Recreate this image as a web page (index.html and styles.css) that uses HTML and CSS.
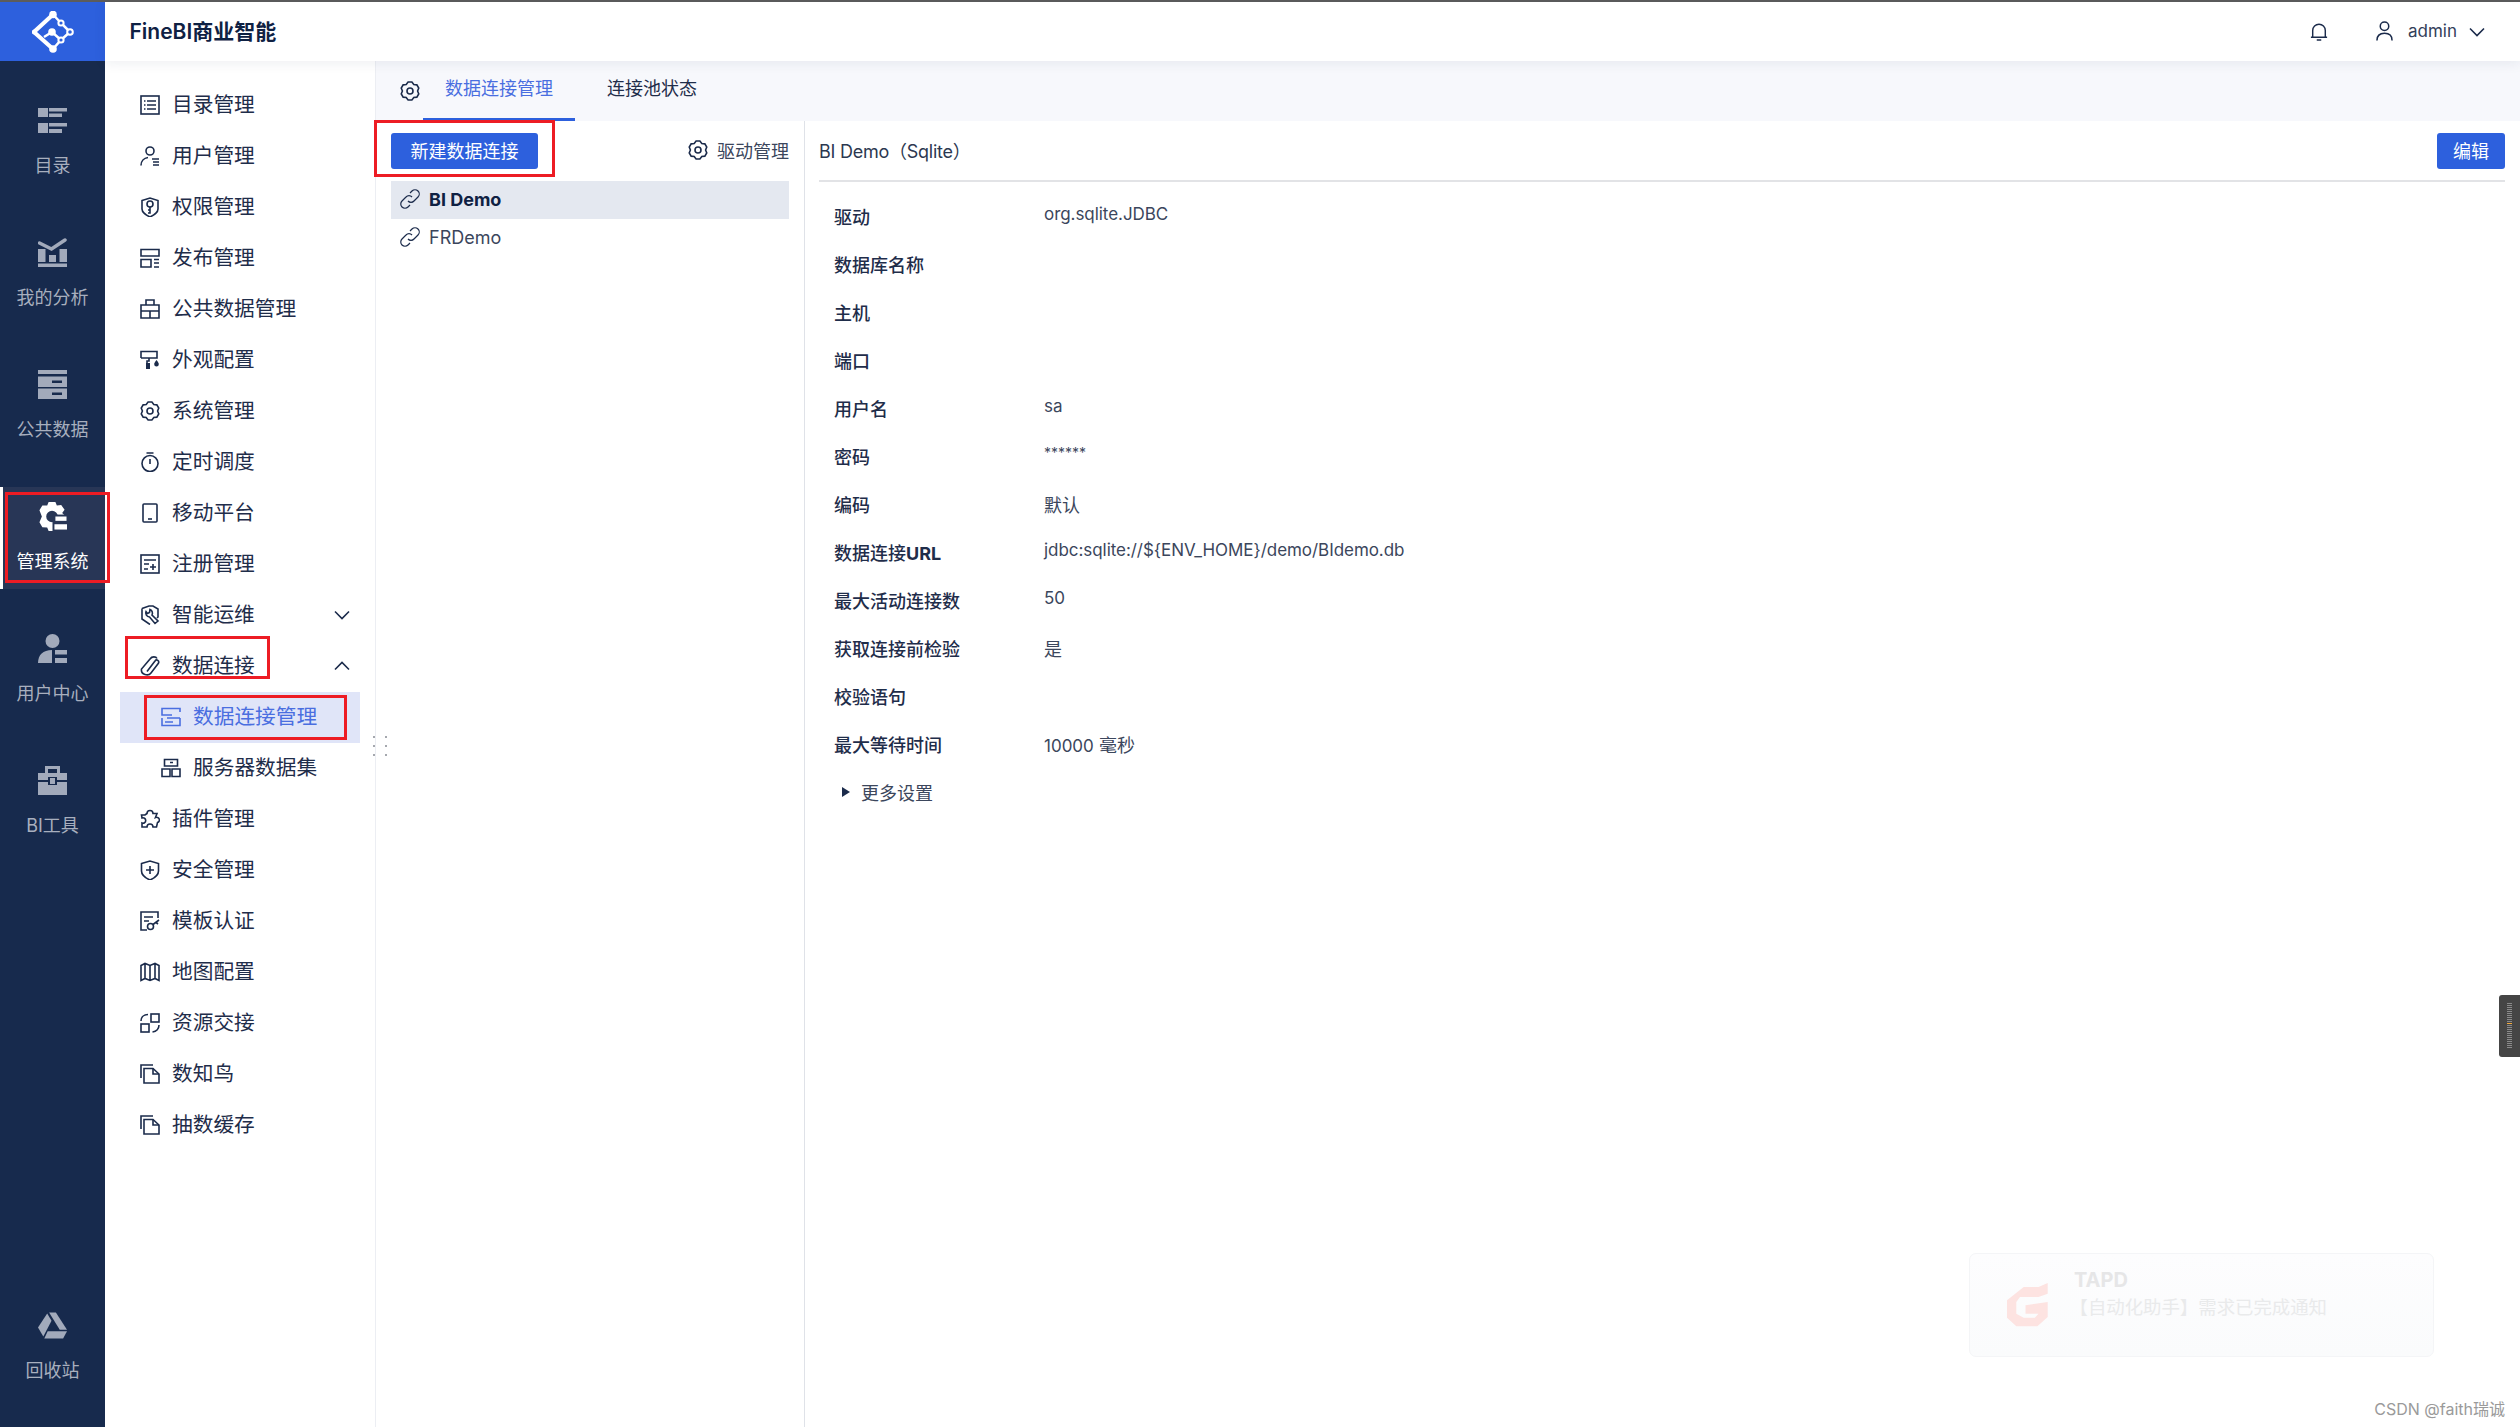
FILE: index.html
```html
<!DOCTYPE html>
<html lang="zh-CN">
<head>
<meta charset="utf-8">
<title>FineBI商业智能</title>
<link rel="stylesheet" href="styles.css">
</head>
<body>
<svg class="defs" width="0" height="0" aria-hidden="true">
  <symbol id="i-gear" viewBox="0 0 20 20"><path d="M8.090 1H11.910L13.800 3.420 16.840 3.840 18.750 7.160 17.600 10 18.750 12.840 16.840 16.160 13.800 16.580 11.910 19H8.090L6.200 16.580 3.160 16.160 1.250 12.840 2.400 10 1.250 7.160 3.160 3.840 6.200 3.420Z"/><circle cx="10" cy="10" r="3"/></symbol>
  <symbol id="i-dir" viewBox="0 0 20 20"><rect x="1" y="1" width="18" height="18"/><path d="M4 6H5.500M7 6H16M4 10H5.500M7 10H16M4 14H5.500M7 14H16"/></symbol>
  <symbol id="i-user" viewBox="0 0 20 20"><circle cx="10" cy="5" r="4"/><path d="M1 19.500C1 15 4 12 8 11.500M12 13H19M13 16H19M13 19H19"/></symbol>
  <symbol id="i-perm" viewBox="0 0 20 20"><path d="M2 3.500 10 1l8 2.500V12c0 4-4 6-8 8-4-2-8-4-8-8Z"/><circle cx="10" cy="7" r="3"/><path d="M10 10V16H8M10 13H8"/></symbol>
  <symbol id="i-pub" viewBox="0 0 20 20"><path d="M1 8V1.500H19V8H1ZM1 11.500H11V19H1ZM14 11.500H19M14 15H19M14 19H19"/></symbol>
  <symbol id="i-box" viewBox="0 0 20 20"><path d="M1 6H19V19H1ZM6 6V1H14V6M1 12H19M10 12V19"/></symbol>
  <symbol id="i-paint" viewBox="0 0 20 20"><path d="M1 8V1.500H17V8H9V11H7V14M1 8H9"/><rect class="solid" x="6" y="13" width="4" height="6"/><path class="solid" d="M16.500 10c1.500 2 2.300 3 2.300 4.200a2.300 2.300 0 0 1-4.600 0c0-1.200.8-2.200 2.300-4.200Z"/></symbol>
  <symbol id="i-timer" viewBox="0 0 20 20"><circle cx="10" cy="11.500" r="8"/><path d="M6.500 1H13.500M10 7V12"/></symbol>
  <symbol id="i-mobile" viewBox="0 0 20 20"><rect x="3" y="1" width="14" height="18" rx="1"/><path d="M8 16H12"/></symbol>
  <symbol id="i-reg" viewBox="0 0 20 20"><rect x="1" y="1" width="18" height="18"/><path d="M4 6H16M4 10H9M4 15H8M13 10V16M10 13H16"/></symbol>
  <symbol id="i-ops" viewBox="0 0 20 20"><path d="M2 3.500 9 1h4l5 3v8l-1 1M2 3.500V14l8 5.500"/><path d="M6 6.500a4 4 0 0 0 3.500 5.500l5.500 6.500 3-2.500-6-6a4 4 0 0 0-2-5.500L9.500 7.500 7.500 8.500Z"/></symbol>
  <symbol id="i-clip" viewBox="0 0 20 20"><path d="M7 15.500 15 5c1.600-2.300 4.700-.2 3.400 2.300L11 17c-2.500 3.300-10.500 2-9.500-4L10 3c2-3 6-2.500 7-.5"/></symbol>
  <symbol id="i-srv" viewBox="0 0 20 20"><path d="M19 5V1.500H1V8H11M19 11H6M1 11V18.500H19V11M4 15H12"/></symbol>
  <symbol id="i-srv2" viewBox="0 0 20 20"><path d="M3.500 1.500H16.500V8H3.500ZM1 11H9V18.500H1ZM11 11H19V18.500H11ZM9 4.500H12"/></symbol>
  <symbol id="i-puzzle" viewBox="0 0 20 20"><path d="M7 4.500a3 3 0 1 1 6 0H17L15.500 8.500a2.700 2.700 0 1 1 2 5L16.500 18H13a3 3 0 0 0-6 0H2V14a2.700 2.700 0 1 0 0-5L1.500 6 5 6Z"/></symbol>
  <symbol id="i-safe" viewBox="0 0 20 20"><path d="M1.500 3.500 10 1l8.500 2.500V11c0 4-4 7-8.500 9-4.500-2-8.500-5-8.500-9Z"/><path d="M10 6V14M6 10H14"/></symbol>
  <symbol id="i-tpl" viewBox="0 0 20 20"><path d="M18 7V1H1V19H7M4 6H13M4 10H9"/><circle cx="10.500" cy="15.500" r="3"/><path d="M13 13.500 19 9M16 11.500 18 13"/></symbol>
  <symbol id="i-map" viewBox="0 0 20 20"><path d="M1 3.500 5 1.500 10 3.500 15 1.500 19 3.500V18.500L15 16.500 10 18.500 5 16.500 1 18.500ZM5 1.500V16.500M10 3.500V18.500M15 1.500V16.500"/></symbol>
  <symbol id="i-swap" viewBox="0 0 20 20"><rect x="1" y="11" width="8" height="8"/><rect x="11" y="1" width="8" height="8"/><path d="M1 8C1 4 4 1.500 8 1.500M19 12C19 15.500 16.500 18.500 12.500 19"/></symbol>
  <symbol id="i-copy" viewBox="0 0 20 20"><path d="M1 14V1H13"/><path d="M4 4.500H13L19 10V19H4Z"/><path d="M13 4.500V10H19"/></symbol>
  <symbol id="i-link" viewBox="0 0 20 20"><path d="M8 12a4 4 0 0 0 6 0l4-4a4 4 0 0 0-6-6L10 4M12 8a4 4 0 0 0-6 0l-4 4a4 4 0 0 0 6 6l2-2"/></symbol>
  <symbol id="i-down" viewBox="0 0 16 10"><path d="M1 1.500 8 8.500 15 1.500"/></symbol>
  <symbol id="i-up" viewBox="0 0 16 10"><path d="M1 8.500 8 1.500 15 8.500"/></symbol>
</svg>

<div class="topline"></div>
<div class="shell">
  <aside class="rail">
    <div class="logo">
      <svg width="42" height="42" viewBox="0 0 42 42">
        <path class="logo-thick" d="M21 3.500 2 21 21 38"/>
        <path class="logo-line" d="M21 3.500 29 12 38 21 29 29 21 38M12 26 20 21 29 29"/>
        <circle class="logo-dot" cx="21" cy="3.500" r="3.800"/><circle class="logo-dot" cx="2.500" cy="21" r="2.500"/><circle class="logo-dot" cx="20" cy="21" r="3.800"/><circle class="logo-dot" cx="21" cy="38" r="3.800"/>
        <circle class="logo-ring" cx="29" cy="12" r="2.600"/><circle class="logo-ring" cx="38" cy="21" r="2.800"/><circle class="logo-ring" cx="29" cy="29" r="2.600"/>
      </svg>
    </div>
    <nav class="rail-list">
      <a class="rail-item">
        <svg class="rail-ico" viewBox="0 0 29 25"><rect width="10" height="9"/><rect y="15" width="10" height="10"/><rect x="11" width="18" height="3.500"/><rect x="11" y="5.500" width="13" height="3.500"/><rect x="11" y="15" width="18" height="3.500"/><rect x="11" y="21" width="13" height="4"/></svg>
        <span>目录</span>
      </a>
      <a class="rail-item">
        <svg class="rail-ico" viewBox="0 0 29 29"><rect x="0" y="11" width="7.500" height="13"/><rect x="11" y="17" width="7" height="7"/><rect x="21.500" y="11" width="7.500" height="13"/><rect x="0" y="25.500" width="29" height="3.500"/><path class="rail-line" d="M1.500 5 13.500 11 27 2"/></svg>
        <span>我的分析</span>
      </a>
      <a class="rail-item">
        <svg class="rail-ico" viewBox="0 0 29 29"><rect width="29" height="4"/><path fill-rule="evenodd" d="M0 6.500H29V17H0ZM14 10.500V13H24V10.500Z"/><path fill-rule="evenodd" d="M0 18.500H29V29H0ZM14 22.500V25H24V22.500Z"/></svg>
        <span>公共数据</span>
      </a>
      <a class="rail-item is-active">
        <svg class="rail-ico" viewBox="0 0 30 30"><path fill-rule="evenodd" d="M11 0H18L19.500 3.500 24 3 27.500 8 25 11.500 29 15 27.500 22 24 26.500 19.500 26.500 18 30H11L9.500 26.500 4.500 26 1.500 21 4 15 1.500 8.500 4.500 3.500 9.500 3.500ZM14.500 9A6 6 0 1 0 14.500 21 6 6 0 0 0 14.500 9Z"/><rect class="rail-cut" x="15" y="13" width="15" height="17"/><rect x="18" y="15" width="11.500" height="4.500"/><rect x="17" y="23" width="13" height="5.500"/></svg>
        <span>管理系统</span>
      </a>
      <a class="rail-item">
        <svg class="rail-ico" viewBox="0 0 29 29"><circle cx="14.500" cy="7" r="7"/><path d="M0 29C0 21 5 16 14 16V29Z"/><rect x="17" y="16" width="12" height="4.500"/><rect x="17" y="24" width="12" height="5"/></svg>
        <span>用户中心</span>
      </a>
      <a class="rail-item">
        <svg class="rail-ico" viewBox="0 0 29 29"><path fill-rule="evenodd" d="M7 0H22V7H29V14H19V11H10V14H0V7H7ZM10 3V7H19V3Z"/><path fill-rule="evenodd" d="M0 16H10V19H19V16H29V29H0Z"/><rect x="12" y="12" width="5" height="6"/></svg>
        <span>BI工具</span>
      </a>
      <a class="rail-item rail-bottom">
        <svg class="rail-ico" viewBox="0 0 30 27"><path d="M9.500 1 14 8.500 5.500 25 0 15.500Z"/><path d="M11.500 0H18.500L30 18H22.500Z"/><path d="M10 19.500H30L26 27H6.500Z"/></svg>
        <span>回收站</span>
      </a>
    </nav>
  </aside>

  <div class="content">
    <header class="topbar">
      <div class="brand">FineBI商业智能</div>
      <div class="top-tools">
        <svg class="bell" viewBox="0 0 20 20"><path d="M1 17H19M3 17V9.500A7 7 0 0 1 17 9.500V17M7.500 20H12.500"/></svg>
        <div class="who">
          <svg class="who-ico" viewBox="0 0 18 20"><circle cx="9" cy="5" r="4.500"/><path d="M1 20C1 15 4 12.500 9 12.500S17 15 17 20"/></svg>
          <span class="who-name">admin</span>
          <svg class="chev who-chev"><use href="#i-down"/></svg>
        </div>
      </div>
    </header>

    <div class="body">
      <nav class="side">
        <a class="side-item"><svg class="ico"><use href="#i-dir"/></svg>目录管理</a>
        <a class="side-item"><svg class="ico"><use href="#i-user"/></svg>用户管理</a>
        <a class="side-item"><svg class="ico"><use href="#i-perm"/></svg>权限管理</a>
        <a class="side-item"><svg class="ico"><use href="#i-pub"/></svg>发布管理</a>
        <a class="side-item"><svg class="ico"><use href="#i-box"/></svg>公共数据管理</a>
        <a class="side-item"><svg class="ico"><use href="#i-paint"/></svg>外观配置</a>
        <a class="side-item"><svg class="ico"><use href="#i-gear"/></svg>系统管理</a>
        <a class="side-item"><svg class="ico"><use href="#i-timer"/></svg>定时调度</a>
        <a class="side-item"><svg class="ico"><use href="#i-mobile"/></svg>移动平台</a>
        <a class="side-item"><svg class="ico"><use href="#i-reg"/></svg>注册管理</a>
        <a class="side-item"><svg class="ico"><use href="#i-ops"/></svg>智能运维<svg class="chev side-chev"><use href="#i-down"/></svg></a>
        <a class="side-item"><svg class="ico"><use href="#i-clip"/></svg>数据连接<svg class="chev side-chev"><use href="#i-up"/></svg></a>
        <a class="side-item side-sub is-current"><svg class="ico"><use href="#i-srv"/></svg>数据连接管理</a>
        <a class="side-item side-sub"><svg class="ico"><use href="#i-srv2"/></svg>服务器数据集</a>
        <a class="side-item"><svg class="ico"><use href="#i-puzzle"/></svg>插件管理</a>
        <a class="side-item"><svg class="ico"><use href="#i-safe"/></svg>安全管理</a>
        <a class="side-item"><svg class="ico"><use href="#i-tpl"/></svg>模板认证</a>
        <a class="side-item"><svg class="ico"><use href="#i-map"/></svg>地图配置</a>
        <a class="side-item"><svg class="ico"><use href="#i-swap"/></svg>资源交接</a>
        <a class="side-item"><svg class="ico"><use href="#i-copy"/></svg>数知鸟</a>
        <a class="side-item"><svg class="ico"><use href="#i-copy"/></svg>抽数缓存</a>
      </nav>

      <main class="main">
        <div class="tabs">
          <svg class="ico tabs-gear"><use href="#i-gear"/></svg>
          <a class="tab is-on">数据连接管理</a>
          <a class="tab">连接池状态</a>
        </div>
        <div class="split">
          <section class="conns">
            <div class="conns-bar">
              <button class="btn">新建数据连接</button>
              <a class="driver"><svg class="ico"><use href="#i-gear"/></svg>驱动管理</a>
            </div>
            <a class="conn is-sel"><svg class="ico"><use href="#i-link"/></svg>BI Demo</a>
            <a class="conn"><svg class="ico"><use href="#i-link"/></svg>FRDemo</a>
          </section>
          <section class="detail">
            <div class="detail-head">
              <span class="detail-title">BI Demo（Sqlite）</span>
              <button class="btn btn-edit">编辑</button>
            </div>
            <dl class="props">
              <div class="prop"><dt>驱动</dt><dd class="v-latin">org.sqlite.JDBC</dd></div>
              <div class="prop"><dt>数据库名称</dt><dd></dd></div>
              <div class="prop"><dt>主机</dt><dd></dd></div>
              <div class="prop"><dt>端口</dt><dd></dd></div>
              <div class="prop"><dt>用户名</dt><dd class="v-latin">sa</dd></div>
              <div class="prop"><dt>密码</dt><dd class="v-pass">******</dd></div>
              <div class="prop"><dt>编码</dt><dd>默认</dd></div>
              <div class="prop"><dt>数据连接<b class="dt-strong">URL</b></dt><dd class="v-latin">jdbc:sqlite://${ENV_HOME}/demo/BIdemo.db</dd></div>
              <div class="prop"><dt>最大活动连接数</dt><dd class="v-latin">50</dd></div>
              <div class="prop"><dt>获取连接前检验</dt><dd>是</dd></div>
              <div class="prop"><dt>校验语句</dt><dd></dd></div>
              <div class="prop"><dt>最大等待时间</dt><dd><span class="v-num">10000</span> 毫秒</dd></div>
            </dl>
            <div class="more"><i class="more-arrow"></i>更多设置</div>
          </section>
        </div>
      </main>
    </div>
  </div>
</div>

<div class="grip"><i></i><i></i><i></i><i></i><i></i><i></i></div>

<div class="toast">
  <svg class="toast-logo" viewBox="0 0 41 44"><path d="M16.700 4H31.500L40.700 0V10.700L31.500 14H13L9.300 19V30.700L16.700 34.700H27.800L31.500 30.700H18.500V22.300L40.700 19V34L30.400 43.300H9.300L0 34.700V17.300Z"/></svg>
  <div class="toast-text">
    <div class="toast-title">TAPD</div>
    <div class="toast-msg">【自动化助手】需求已完成通知</div>
  </div>
</div>
<div class="watermark">CSDN @faith瑞诚</div>
<div class="dock"><i class="dock-ticks"></i><i class="dock-mark"></i></div>

<div class="mark mark-rail"></div>
<div class="mark mark-new"></div>
<div class="mark mark-conn"></div>
<div class="mark mark-sub"></div>
</body>
</html>
```

FILE: styles.css
```css
* { box-sizing: border-box; }
html, body { margin: 0; height: 1427px; overflow: hidden; }
body {
  position: relative;
  font-family: Inter, "Noto Sans CJK SC", sans-serif;
  font-size: 18px;
  color: #2c3850;
  background: #fff;
}
.defs { position: absolute; }
a { color: inherit; text-decoration: none; }
i { display: block; }

.topline { height: 2px; background: #5c5c5c; }
.shell { display: flex; height: 1425px; }

/* left rail */
.rail { width: 105px; flex: none; display: flex; flex-direction: column; background: #172a4d; }
.logo { height: 59px; background: #2d60dd; display: flex; align-items: center; justify-content: center; }
.logo-thick { fill: none; stroke: #fff; stroke-width: 4; }
.logo-line { fill: none; stroke: #fff; stroke-width: 2.500; }
.logo-dot { fill: #fff; }
.logo-ring { fill: #2d60dd; stroke: #fff; stroke-width: 2; }
.rail-list { flex: 1; display: flex; flex-direction: column; gap: 30px; padding: 30px 0 29px; }
.rail-item {
  height: 102px; display: flex; flex-direction: column; align-items: center;
  padding-top: 15px; font-size: 18px; line-height: 26px; color: #a8afbe;
}
.rail-ico { width: 29px; height: 29px; margin-bottom: 18px; fill: #a2aabb; flex: none; }
.rail-line { fill: none; stroke: #a2aabb; stroke-width: 3.500; stroke-linecap: round; }
.rail-item.is-active { background: #283656; border-left: 3px solid #fff; color: #fff; padding-right: 3px; }
.rail-item.is-active .rail-ico { fill: #fff; }
.rail-cut { fill: #283656 !important; }
.rail-bottom { margin-top: auto; }

/* header */
.content { flex: 1; min-width: 0; display: flex; flex-direction: column; }
.topbar {
  height: 59px; flex: none; display: flex; align-items: center; justify-content: space-between;
  padding: 0 35px 0 24.500px; background: #fff; box-shadow: 0 2px 12px rgba(20, 40, 80, .08);
  position: relative; z-index: 2;
}
.brand { font-size: 21px; font-weight: 600; color: #0f2143; padding-bottom: 3px; }
.top-tools { display: flex; align-items: center; gap: 48px; }
.bell { width: 18px; height: 20px; fill: none; stroke: #1b2b4b; stroke-width: 1.600; margin-bottom: 2px; }
.who { display: flex; align-items: center; }
.who-ico { width: 17px; height: 20px; fill: none; stroke: #1b2b4b; stroke-width: 1.600; margin: 0 15px 2px 0; }
.who-name { font-size: 17px; color: #33405a; padding-bottom: 2px; }
.chev { width: 16px; height: 10px; fill: none; stroke: #1b2b4b; stroke-width: 1.600; flex: none; }
.who-chev { margin-left: 12px; }

.body { flex: 1; min-height: 0; display: flex; }

/* second-level menu */
.side { width: 271px; flex: none; padding-top: 18.500px; border-right: 1px solid #eceef3; background: #fff; }
.side-item { height: 51px; display: flex; align-items: center; padding: 0 0 .5px 35px; font-size: 20.700px; line-height: 28px; color: #1f2d4a; }
.ico { width: 20px; height: 20px; flex: none; fill: none; stroke: #1b2b4b; stroke-width: 1.600; margin-right: 12px; }
.solid { fill: #1b2b4b; stroke: none; }
.side-chev { margin: .5px 25px 0 auto; }
.side-sub { margin-left: 15px; width: 240px; padding-left: 41px; }
.is-current { background: #e0e5f8; color: #4a6ee0; }
.is-current .ico { stroke: #4a6ee0; }

/* tabs */
.main { flex: 1; min-width: 0; display: flex; flex-direction: column; }
.tabs { height: 60px; flex: none; display: flex; align-items: stretch; background: #f7f8fc; padding-left: 24px; }
.tabs-gear { align-self: center; margin: 0 3px 0 0; }
.tab { display: flex; align-items: center; padding: 0 22px 5px; border-bottom: 3px solid transparent; font-size: 18px; color: #1f2d4a; margin-right: 10px; }
.tab.is-on { color: #4a6ee0; border-bottom-color: #2d60dd; }

.split { flex: 1; min-height: 0; display: flex; }
.conns { width: 429px; flex: none; padding: 12px 15px 0; border-right: 1px solid #dfe2e8; }
.conns-bar { height: 36px; margin-bottom: 12px; display: flex; align-items: center; justify-content: space-between; }
.btn {
  height: 36px; border: 0; border-radius: 3px; background: #2d60dd; color: #fff; padding: 0 0 2px;
  width: 147px; font: inherit; font-size: 18px;
}
.driver { display: flex; align-items: center; font-size: 18px; color: #3b465c; padding-bottom: 2px; }
.driver .ico { margin-right: 9px; }
.conn { height: 38px; display: flex; align-items: center; padding: 0 0 2px 9px; font-size: 18px; color: #3b465c; }
.conn .ico { margin-right: 9px; stroke-width: 1.200; }
.is-sel { background: #e4e8f0; font-weight: 700; color: #0f2143; }

/* detail */
.detail { flex: 1; min-width: 0; padding: 12px 15px 0 14px; }
.detail-head { height: 49px; padding-bottom: 12px; display: flex; align-items: center; justify-content: space-between; border-bottom: 2px solid #e2e3e6; }
.detail-title { padding-bottom: 2px; letter-spacing: -.25px; }
.btn-edit { width: 68px; }
.props { margin: 11px 0 0; }
.prop { height: 48px; display: flex; align-items: center; padding: 0 0 3px 15px; }
.prop dt { width: 210px; flex: none; font-weight: 500; color: #1f2d4a; }
.dt-strong { font-weight: 700; }
.prop dd { margin: 0; color: #3b465c; }
.prop .v-latin { font-size: 17px; letter-spacing: -.05px; padding-bottom: 3px; }
.prop .v-pass { font-size: 14px; padding-bottom: 7px; }
.v-num { font-size: 17px; }
.more { height: 48px; display: flex; align-items: center; padding: 0 0 3px 23px; color: #3b465c; }
.more-arrow { width: 0; height: 0; border-left: 8px solid #1b2b4b; border-top: 5.500px solid transparent; border-bottom: 5.500px solid transparent; margin-right: 11px; }

/* overlays */
.grip { position: absolute; left: 373px; top: 736px; width: 14px; display: grid; grid-template-columns: 2px 2px; justify-content: space-between; row-gap: 7px; }
.grip i { width: 2px; height: 2px; background: #a5a8ae; }

.toast {
  position: absolute; left: 1969px; top: 1253px; width: 465px; height: 104px;
  display: flex; padding: 14px 0 0 37px; border: 1px solid #f4f5f7; border-radius: 7px;
  background: linear-gradient(#fdfdfe, #fafbfc);
}
.toast-logo { width: 41px; height: 44px; margin: 15px 26px 0 0; fill: #fde3e1; flex: none; }
.toast-title { font-size: 20px; font-weight: 700; line-height: 24px; color: #e6e6e7; }
.toast-msg { margin: 2px 0 0 -4.500px; font-size: 18.400px; line-height: 26px; color: #e9eaeb; }

.watermark { position: absolute; right: 15px; top: 1398px; font-size: 16px; line-height: 22px; color: #9a9a9a; }

.dock { position: absolute; left: 2499px; top: 995px; width: 21px; height: 62px; background: #454545; border-radius: 3px 0 0 3px; }
.dock-ticks { position: absolute; left: 8px; top: 8px; width: 5px; height: 46px; background: repeating-linear-gradient(#8a8a8a 0 1px, transparent 1px 2px); }
.dock-mark { position: absolute; left: 8px; top: 28px; width: 5px; height: 1px; background: #f2a93b; box-shadow: 0 1px 0 #454545, 0 -1px 0 #454545; }

.mark { position: absolute; border: 3px solid #ed1c24; pointer-events: none; }
.mark-rail { left: 5px; top: 492px; width: 105px; height: 91px; }
.mark-new { left: 374px; top: 120px; width: 181px; height: 57px; }
.mark-conn { left: 125px; top: 636px; width: 145px; height: 43px; }
.mark-sub { left: 144px; top: 695px; width: 203px; height: 45px; }
```
